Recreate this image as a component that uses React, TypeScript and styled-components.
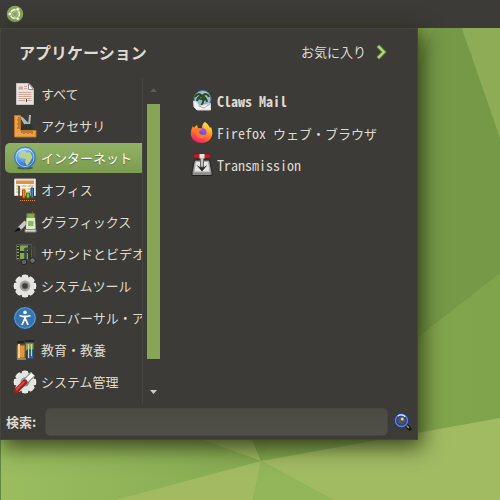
import React, { useState } from 'react';
import styled, { createGlobalStyle, css } from 'styled-components';

const Global = createGlobalStyle`
  *, *::before, *::after { box-sizing: border-box; }
  body {
    margin: 0;
    background: #86aa51;
    color: #dfdbd2;
    font: 13px/20px "Noto Sans CJK JP", sans-serif;
  }
  button, input { font: inherit; color: inherit; }
  h1, ul { margin: 0; padding: 0; }
`;

const Desktop = styled.div`
  position: relative;
  isolation: isolate;
  display: flex;
  flex-direction: column;
  align-items: flex-start;
  min-height: 100vh;
  overflow: hidden;
`;

const WallpaperArt = styled.svg`
  position: absolute;
  inset: 0;
  z-index: -1;
  width: 100%;
  height: 100%;
`;

const Panel = styled.header`
  display: flex;
  align-items: center;
  align-self: stretch;
  height: 28px;
  padding: 0 6px;
  background: #3c3b37;
`;

const IconButton = styled.button`
  display: grid;
  place-items: center;
  flex: none;
  padding: 0;
  border: 0;
  background: none;
`;

const Menu = styled.main`
  display: flex;
  flex-direction: column;
  width: 418px;
  max-width: 100%;
  border: 1px solid #464540;
  background: #3c3b37;
  box-shadow: 3px 6px 20px 1px rgba(25, 30, 5, 0.75);
`;

const MenuHeader = styled.div`
  display: flex;
  align-items: center;
  justify-content: space-between;
  height: 46px;
  padding: 0 30px 0 18px;
`;

const Title = styled.h1`
  font-size: 16px;
  line-height: 24px;
  font-weight: 700;
`;

const Favorites = styled.button`
  display: flex;
  align-items: center;
  gap: 9px;
  padding: 0;
  border: 0;
  background: none;
`;

const Columns = styled.div`
  display: flex;
  margin-top: 3px;
`;

const CategoryList = styled.ul`
  flex: none;
  width: 142px;
  padding: 0 0 6px 4px;
  border-right: 1px solid #464540;
  overflow: hidden;
  list-style: none;
`;

const entry = css`
  display: flex;
  align-items: center;
  height: 32px;
  border: 0;
  background: none;
  text-align: left;
  white-space: nowrap;
  svg { flex: none; }
`;

const CategoryButton = styled.button<{ $active: boolean }>`
  ${entry}
  gap: 4px;
  width: 100%;
  padding: 0 0 0 8px;
  overflow: hidden;
  ${({ $active }) => $active && css`
    color: #fff;
    background: linear-gradient(#92b365, #7b9b50) center / 100% 30px no-repeat;
    clip-path: inset(1px 0 1px 0 round 5px 0 0 5px);
    text-shadow: 0 1px 1px #56713a;
  `}
`;

const Scrollbar = styled.div`
  display: flex;
  flex-direction: column;
  align-items: center;
  flex: none;
  width: 13px;
  margin: 0 30px 0 4px;
  padding: 9px 0;
`;

const Track = styled.div`
  display: flex;
  flex: 1;
  width: 100%;
  padding: 10px 0 29px;
`;

const Thumb = styled.div`
  flex: 1;
  background: #86a556;
`;

const Arrow = styled.svg`
  display: block;
  flex: none;
`;

const AppList = styled.ul`
  flex: 1;
  min-width: 0;
  padding-top: 7px;
  list-style: none;
`;

const AppButton = styled.button<{ $strong?: boolean }>`
  ${entry}
  gap: 3px;
  padding: 0;
  font-weight: ${({ $strong }) => ($strong ? 700 : 400)};
`;

const Latin = styled.span`
  font-size: 14px;
  font-feature-settings: "hwid";
  white-space: pre;
`;

const SearchBar = styled.form`
  display: flex;
  align-items: center;
  height: 35px;
  padding: 0 5px;
`;

const SearchLabel = styled.label`
  flex: none;
  width: 39px;
  font-weight: 700;
`;

const SearchInput = styled.input`
  flex: 1;
  min-width: 0;
  height: 28px;
  margin-right: 6px;
  padding: 0 8px;
  border: 1px solid #474640;
  border-radius: 5px;
  background: linear-gradient(#4b4a44, #504f47);
  outline: none;
`;

function Wallpaper() {
  return (
    <WallpaperArt viewBox="0 0 500 500" preserveAspectRatio="xMidYMid slice" aria-hidden="true">
      <defs>
        <linearGradient id="wl" x1="0" x2="1">
          <stop offset="0" stopColor="#9bbd60" />
          <stop offset="1" stopColor="#86aa52" />
        </linearGradient>
        <linearGradient id="wr" x1="0" x2="1">
          <stop offset="0" stopColor="#86aa52" />
          <stop offset="1" stopColor="#80a44c" />
        </linearGradient>
      </defs>
      <rect width="500" height="500" fill="url(#wr)" />
      <path d="M380 0H500V273L380 367Z" fill="#759947" />
      <path d="M380 0H446L380 150Z" fill="#7a9f4a" />
      <path d="M452 0H500V138Z" fill="#8dac55" />
      <path d="M0 400H94L261 461L115 500H0Z" fill="url(#wl)" />
      <path d="M94 400H236L261 461Z" fill="#9db860" />
      <path d="M236 400H290L261 461Z" fill="#80a44d" />
      <path d="M261 461L500 418V500H333Z" fill="#a1bb63" />
      <path d="M261 461L333 500H253Z" fill="#93b65b" />
      <path d="M261 461L253 500H115Z" fill="#a2bb63" />
      <path d="M0 440H1V500H0Z" fill="#628643" />
    </WallpaperArt>
  );
}

const Svg = ({ children, size = 24 }: { children: React.ReactNode; size?: number }) => (
  <svg width={size} height={size} viewBox="0 0 24 24" aria-hidden="true">{children}</svg>
);

const LogoIcon = () => (
  <Svg size={18}>
    <circle cx="12" cy="12" r="11" fill="#87a556" />
    <circle cx="12" cy="12" r="5.8" fill="none" stroke="#f4f6ee" strokeWidth="2.2" />
    <circle cx="12" cy="12" r="3.2" fill="#87a556" stroke="#c3d3a6" strokeWidth="1" />
    <g fill="#fff" stroke="#87a556" strokeWidth="1">
      <circle cx="5" cy="12" r="2.4" />
      <circle cx="15.6" cy="5.8" r="2.4" />
      <circle cx="15.6" cy="18.2" r="2.4" />
    </g>
  </Svg>
);

const DocumentIcon = () => (
  <Svg>
    <path d="M3.5 1.5H16L20.5 6.5V22.5H3.5Z" fill="#e6e4df" stroke="#c9c6c0" />
    <path d="M15.5 1.5V7.5H20.5Z" fill="#fff" stroke="#8e8b86" />
    <path d="M5.5 4.5H10V7.5H5.5Z" fill="#cda99d" />
    <path d="M11 4.5H14M11 6.5H14M5.5 10.5H18.5M5.5 12.5H18.5M5.5 14.5H18.5M5.5 16.5H18.5M5.5 18.5H12M14 18.5H18.5" stroke="#c9a79b" />
    <path d="M13.5 17V20" stroke="#60443d" />
  </Svg>
);

const RulerIcon = () => (
  <Svg>
    <path d="M8 3L14 13M17 1L16 11L9 4" stroke="#b4b8b4" strokeWidth="2" fill="none" />
    <path d="M8 13L12 10L18 10L20 14L14 20L8 17Z" fill="#30332f" />
    <path d="M1.5 1.5H7.5V16.5H23V23H1.5Z" fill="#eba34a" stroke="#c07526" />
    <path d="M5 4H7M4 6H7M5 8H7M4 10H7M5 12H7M4 14H7M9 17V19M11 17V20M13 17V19M15 17V20M17 17V19M19 17V20" stroke="#8f5515" />
  </Svg>
);

const GlobeIcon = () => (
  <Svg>
    <defs>
      <radialGradient id="gb" cx=".4" cy=".3" r=".7">
        <stop stopColor="#b2d8ff" /><stop offset=".6" stopColor="#5292e5" /><stop offset="1" stopColor="#1d59b3" />
      </radialGradient>
    </defs>
    <ellipse cx="12" cy="22" rx="8" ry="1.6" fill="#4d5e2f" />
    <circle cx="12" cy="11.5" r="10.5" fill="url(#gb)" stroke="#3d78cf" />
    <circle cx="12" cy="11.5" r="9" fill="none" stroke="#a5cdf8" strokeWidth="1" />
    <path d="M6 8L9 5.5L12 7L17 6L19.5 11L17 16L14 20L12 16L13 13L9 12L6 11Z" fill="#b8d586" />
    <path d="M4 7C8 2 16 2 19 6" stroke="#d8ecff" fill="none" />
  </Svg>
);

const OfficeIcon = () => (
  <Svg>
    <path d="M1.5 1H22.5V17.5H1.5Z" fill="#f6f5f1" stroke="#c8c6c2" />
    <path d="M3 2.5H21V6H3Z" fill="#e2914a" />
    <path d="M3 8H21M3 11H21M3 14H21" stroke="#e3bd72" strokeWidth="1.4" />
    <path d="M8 6V15M14 6V15" stroke="#fff" />
    <path d="M6 8V19H21" fill="none" stroke="#444" strokeWidth="1.6" />
    <path d="M9.5 12H12V20H9.5Z" fill="#f09036" stroke="#aa4b08" />
    <path d="M13.5 15H16.5V20H13.5Z" fill="#86bf36" stroke="#447914" />
    <path d="M18 10H20.5V20H18Z" fill="#4382cf" stroke="#174a8c" />
    <path d="M7 22.5H22" stroke="#e88b31" strokeDasharray="1 1" />
  </Svg>
);

const GraphicsIcon = () => (
  <Svg>
    <path d="M13 12L6 19" stroke="#c9c8c3" strokeWidth="4" />
    <path d="M6 17L8 20L1 22Z" fill="#0f0f0f" />
    <path d="M18 4L20 1V5Z" fill="#bd562a" />
    <path d="M14 3.5H21.5L22.5 18H13Z" fill="#80ae43" stroke="#66784d" />
    <path d="M13.5 8H22L22.5 19H13Z" fill="#deeccc" />
    <path d="M15 11H20.5V16H15Z" fill="#8eb85c" />
    <path d="M12 19.5H23V22H12Z" fill="#d5d5d2" stroke="#888" />
  </Svg>
);

const MediaIcon = () => (
  <Svg>
    <path d="M3.5 2.5H18.5V18H3.5Z" fill="#303a2b" stroke="#565c51" />
    <path d="M7 3.5H15V9H7ZM7 11H15V17H7Z" fill="#86a85b" />
    <path d="M5 4V18" stroke="#a8afa2" strokeWidth="1.6" strokeDasharray="1 2" />
    <path d="M12.5 20V7L21.5 5V18" fill="none" stroke="#404543" strokeWidth="2.6" />
    <circle cx="11" cy="20" r="2.8" fill="#606563" stroke="#222" />
    <circle cx="19.5" cy="18.5" r="2.8" fill="#6a6f6d" stroke="#222" />
  </Svg>
);

const Teeth = () => (
  <>
    {[0, 45, 90, 135, 180, 225, 270, 315].map((a) => (
      <path key={a} d="M9 1.2Q12 0 15 1.2L15.8 5.5H8.2Z" fill="#e9e9e7" transform={`rotate(${a} 12 12)`} />
    ))}
    <circle cx="12" cy="12" r="9.2" fill="#e4e4e2" />
  </>
);

const GearIcon = () => (
  <Svg>
    <Teeth />
    <circle cx="12" cy="12" r="5.4" fill="#a3a29f" />
    <circle cx="12" cy="12" r="3" fill="#3f3e3a" stroke="#6b6a66" />
  </Svg>
);

const AccessIcon = () => (
  <Svg>
    <circle cx="12" cy="12" r="11" fill="#3674b4" stroke="#205185" />
    <circle cx="12" cy="12" r="10.3" fill="none" stroke="#669bcd" />
    <circle cx="12" cy="6.4" r="1.8" fill="#fff" />
    <path d="M6.5 9.5L10.5 10.5H13.5L17.5 9.5M12 10V14M11.5 13L9 19M12.5 13L15 19" stroke="#fff" strokeWidth="1.8" fill="none" />
  </Svg>
);

const EducationIcon = () => (
  <Svg>
    <path d="M4 7H12V20H4Z" fill="#dc9744" stroke="#8b5722" />
    <path d="M6 6V20" stroke="#f4d195" strokeWidth="2" />
    <path d="M12.5 5H20.5V13H12.5Z" fill="#8ba55a" stroke="#5b693b" />
    <path d="M14 12H20.5V21H14Z" fill="#37679c" stroke="#28445f" />
    <path d="M4 4H11M12 3H21" stroke="#242522" strokeWidth="2" />
    <path d="M15.5 6V20M18.5 6V18" stroke="#c6db9d" />
    <path d="M4 21H13" stroke="#dec298" />
  </Svg>
);

const AdminIcon = () => (
  <Svg>
    <Teeth />
    <circle cx="12" cy="12" r="4.5" fill="#92918d" />
    <path d="M13 11L20 4" stroke="#73726e" strokeWidth="6" />
    <path d="M13 11L20 4" stroke="#faf9f7" strokeWidth="4" />
    <path d="M20 4L22 1" stroke="#3c3b37" strokeWidth="2.4" />
    <path d="M3.5 20.5L12 12" stroke="#a31f20" strokeWidth="5" strokeLinecap="round" />
    <path d="M3.5 19.5L11 12" stroke="#dc4646" strokeWidth="1.8" strokeLinecap="round" />
  </Svg>
);

const ClawsIcon = () => (
  <Svg>
    <circle cx="12.5" cy="10" r="8.5" fill="#8db5d8" stroke="#536f86" />
    <path d="M5 8C7 3 16 0 19 5C20 9 20 11 17 14Z" fill="#9fc3dc" />
    <path d="M11 17Q15 12 12 7" fill="none" stroke="#3c482b" strokeWidth="2" />
    <path d="M12 7Q8 3 5 8M12 7Q8 7 7 12M12 7Q17 3 19 8M12 7Q16 8 17 13M8 9L15 11" stroke="#2f4a22" strokeWidth="2.2" fill="none" />
    <path d="M3.5 12L7 13L9 17L20.5 14.5V21H7L4 18Z" fill="#f2f2f0" stroke="#d5d5d1" />
    <path d="M9 17L14 19L20 15" fill="none" stroke="#aaa" />
  </Svg>
);

const FirefoxIcon = () => (
  <Svg>
    <defs>
      <linearGradient id="ff" x1=".8" y1="0" x2=".3" y2="1">
        <stop stopColor="#fff250" /><stop offset=".4" stopColor="#ff9f21" /><stop offset=".72" stopColor="#ff553c" /><stop offset="1" stopColor="#ed1672" />
      </linearGradient>
      <linearGradient id="fp" x1=".7" y1="0" x2=".3" y2="1">
        <stop stopColor="#a657ed" /><stop offset="1" stopColor="#534ad3" />
      </linearGradient>
    </defs>
    <path d="M15 1C18 3 19 5 20 7L21 6C23 11 23 16 19 19.500C15 23 7 23 3 18.500C0 15 0 10 3 5L4 7C5 5 6 5 7 4L8 7L12 8C12 4 13 2 15 1Z" fill="url(#ff)" />
    <circle cx="12" cy="11.5" r="4.6" fill="url(#fp)" />
    <path d="M4 9C7 6 10 7 12 8C11 10 9 9.500 9 11.500C10 14 14 14.500 16 13C15 17.500 9 18.500 6 14.500Z" fill="#ff7a2c" />
  </Svg>
);

const TransmissionIcon = () => (
  <Svg>
    <path d="M4.500 7H19.500L22 19V22.500H2V19Z" fill="#8d8c89" stroke="#222220" />
    <path d="M5.500 8.500H18.500L20 19H4Z" fill="#e7e6e2" stroke="#aaa" />
    <path d="M6.500 12L10 14V10H14V14L17.500 12L12 18.500Z" fill="#2a2b29" />
    <path d="M10.500 3H13.500V14H10.500Z" fill="#c4c3c0" stroke="#666" />
    <rect x="3.500" y="1" width="17" height="4" rx="1.600" fill="#c91c20" stroke="#790f12" strokeWidth=".6" />
    <rect x="9.500" y="1" width="5" height="4.500" fill="#e7e5e3" />
  </Svg>
);

const SearchIcon = () => (
  <Svg size={18}>
    <path d="M16 16L21 21" stroke="#171715" strokeWidth="5" strokeLinecap="round" />
    <path d="M17 17L20 20" stroke="#9a9585" strokeWidth="2" />
    <circle cx="10" cy="10" r="7.7" fill="#54534f" stroke="#1f3690" strokeWidth="4" />
    <circle cx="10" cy="10" r="8" fill="none" stroke="#5f86e6" strokeWidth="1.8" />
    <path d="M5 4C8 2 12 2 15 5" fill="none" stroke="#d8e5ff" strokeWidth="1.6" />
    <circle cx="11" cy="8" r="2" fill="#d1d0ca" />
  </Svg>
);

const categories = [
  ['すべて', DocumentIcon],
  ['アクセサリ', RulerIcon],
  ['インターネット', GlobeIcon],
  ['オフィス', OfficeIcon],
  ['グラフィックス', GraphicsIcon],
  ['サウンドとビデオ', MediaIcon],
  ['システムツール', GearIcon],
  ['ユニバーサル・アクセス', AccessIcon],
  ['教育・教養', EducationIcon],
  ['システム管理', AdminIcon],
] as const;

export default function App() {
  const [active, setActive] = useState(2);
  const [query, setQuery] = useState('');
  return (
    <>
      <Global />
      <Desktop>
        <Wallpaper />
        <Panel>
          <IconButton aria-label="メニュー"><LogoIcon /></IconButton>
        </Panel>
        <Menu>
          <MenuHeader>
            <Title>アプリケーション</Title>
            <Favorites>
              お気に入り
              <svg width="12" height="18" viewBox="0 0 12 18" aria-hidden="true">
                <path d="M3 3L9 9L3 15" fill="none" stroke="#5a8b28" strokeWidth="4" />
                <path d="M3 3L9 9L3 15" fill="none" stroke="#b9d58f" strokeWidth="2" />
              </svg>
            </Favorites>
          </MenuHeader>
          <Columns>
            <CategoryList>
              {categories.map(([name, Icon], i) => (
                <li key={name}>
                  <CategoryButton $active={i === active} onClick={() => setActive(i)}>
                    <Icon />{name}
                  </CategoryButton>
                </li>
              ))}
            </CategoryList>
            <Scrollbar>
              <Arrow width="7" height="7" viewBox="0 0 7 7"><path d="M0 5H7L3.5 1Z" fill="#5b5a55" /></Arrow>
              <Track><Thumb /></Track>
              <Arrow width="7" height="7" viewBox="0 0 7 7"><path d="M0 2H7L3.5 6Z" fill="#d0cdc4" /></Arrow>
            </Scrollbar>
            <AppList>
              <li><AppButton $strong><ClawsIcon /><Latin>Claws Mail</Latin></AppButton></li>
              <li><AppButton><FirefoxIcon /><span><Latin>Firefox </Latin>ウェブ・ブラウザ</span></AppButton></li>
              <li><AppButton><TransmissionIcon /><Latin>Transmission</Latin></AppButton></li>
            </AppList>
          </Columns>
          <SearchBar onSubmit={(e) => e.preventDefault()}>
            <SearchLabel htmlFor="query">検索:</SearchLabel>
            <SearchInput id="query" value={query} onChange={(e) => setQuery(e.target.value)} />
            <IconButton aria-label="検索"><SearchIcon /></IconButton>
          </SearchBar>
        </Menu>
      </Desktop>
    </>
  );
}
